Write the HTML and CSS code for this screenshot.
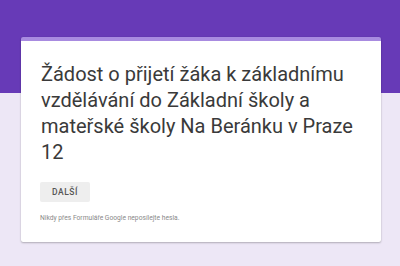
FILE: index.html
```html
<!DOCTYPE html>
<html lang="cs">
<head>
<meta charset="utf-8">
<title>Žádost o přijetí</title>
<link rel="stylesheet" href="styles.css">
</head>
<body>
<div class="page">
  <div class="card">
    <h1 class="title">Žádost o přijetí žáka k základnímu vzdělávání do Základní školy a mateřské školy Na Beránku v Praze 12</h1>
    <div class="actions">
      <button class="btn" type="button">Další</button>
    </div>
    <p class="note">Nikdy přes Formuláře Google neposílejte hesla.</p>
  </div>
</div>
</body>
</html>
```

FILE: styles.css
```css
html, body {
  margin: 0;
  padding: 0;
}
body {
  width: 400px;
  height: 266px;
  overflow: hidden;
  background: linear-gradient(to bottom, #673ab7 0, #673ab7 93px, #ede7f6 93px, #ede7f6 100%);
  font-family: Roboto, "Noto Sans", Arial, sans-serif;
}
.page {
  padding: 37px 19px 0 21px;
}
.card {
  width: 360px;
  box-sizing: border-box;
  background: #fff;
  border-top: 4px solid #a88be0;
  border-radius: 2px;
  box-shadow: 0 1px 2px rgba(0,0,0,0.25), 0 0 1px rgba(0,0,0,0.12);
  padding: 20px 19px 19px 19px;
}
.title {
  margin: 0;
  padding-left: 1px;
  font-size: 20px;
  line-height: 26px;
  font-weight: 400;
  color: #3a3a3a;
}
.actions {
  margin-top: 17px;
  display: flex;
}
.btn {
  width: 50px;
  height: 20px;
  border: 0;
  border-radius: 2px;
  background: #eeeeee;
  color: #555;
  font-family: Roboto, "Noto Sans", Arial, sans-serif;
  font-size: 8.5px;
  font-weight: 500;
  letter-spacing: 0.6px;
  text-transform: uppercase;
  padding: 0;
}
.note {
  margin: 12px 0 0 0;
  font-size: 6.7px;
  line-height: 9px;
  color: #8a8a8a;
}
```
